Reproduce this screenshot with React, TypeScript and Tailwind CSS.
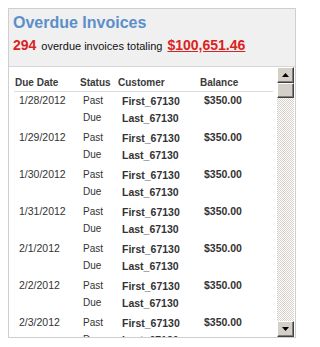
import React from 'react';

const rows = ['1/28/2012', '1/29/2012', '1/30/2012', '1/31/2012', '2/1/2012', '2/2/2012', '2/3/2012', '2/4/2012'];

function ScrollButton({ dir }: { dir: 'up' | 'down' }) {
  return (
    <div className="h-[16px] w-full flex items-center justify-center bg-[#d4d0c8] border-t border-l border-t-white border-l-white border-r border-b border-r-[#404040] border-b-[#404040] shadow-[inset_-1px_-1px_0_#808080]">
      <svg width="7" height="4" viewBox="0 0 7 4">
        {dir === 'up' ? <path d="M3.5 0 L7 4 L0 4 Z" fill="#000" /> : <path d="M0 0 L7 0 L3.5 4 Z" fill="#000" />}
      </svg>
    </div>
  );
}

export default function App() {
  return (
    <div className="min-h-screen bg-white pl-[8px] pt-[8px]" style={{ fontFamily: '"Liberation Sans", Arial, sans-serif' }}>
      <div className="w-[288px] h-[330px] border border-[#cfcfcf] flex flex-col">
        <div className="h-[58px] shrink-0 bg-[#f0f0f0] border-b border-[#d6d6d6] px-[4px] pt-[4px]">
          <h1 className="text-[16px] leading-[20px] font-bold text-[#5b8fca]">Overdue Invoices</h1>
          <p className="mt-[3px] leading-[18px] text-[11px] text-[#111] flex items-baseline">
            <span className="text-[14px] font-bold text-[#d92323]">294</span>
            <span className="ml-[5px]">overdue invoices totaling</span>
            <a className="ml-[5px] text-[14px] font-bold text-[#d92323] underline">$100,651.46</a>
          </p>
        </div>
        <div className="flex-1 flex min-h-0">
          <div className="flex-1 overflow-hidden pl-[5px] pr-[4px] pt-[9px]">
            <div className="grid grid-cols-[66px_38px_82px_1fr] h-[16px] border-b border-[#dcdcdc] text-[10px] leading-[13px] font-bold text-[#3a3a3a]">
              <span className="pl-[1px]">Due Date</span>
              <span>Status</span>
              <span>Customer</span>
              <span>Balance</span>
            </div>
            {rows.map((d) => (
              <div key={d} className="grid grid-cols-[66px_38px_82px_1fr] h-[37px] leading-[17px] text-[#333]">
                <span className="pl-[5px] text-[10.5px]">{d}</span>
                <span className="pl-[3px] text-[10px] flex flex-col">
                  <span>Past</span>
                  <span>Due</span>
                </span>
                <span className="pl-[4px] pt-[1px] text-[10.5px] font-bold flex flex-col">
                  <span>First_67130</span>
                  <span>Last_67130</span>
                </span>
                <span className="pl-[4px] text-[10.5px] font-bold">$350.00</span>
              </div>
            ))}
          </div>
          <div className="w-[17px] mr-[1px] flex flex-col">
            <ScrollButton dir="up" />
            <div className="h-[15px] bg-[#d4d0c8] border-t border-l border-t-white border-l-white border-r border-b border-r-[#404040] border-b-[#404040] shadow-[inset_-1px_-1px_0_#808080]" />
            <div className="flex-1 bg-[repeating-conic-gradient(#d4d0c8_0_25%,#ffffff_0_50%)] bg-[length:2px_2px]" />
            <ScrollButton dir="down" />
          </div>
        </div>
      </div>
    </div>
  );
}
